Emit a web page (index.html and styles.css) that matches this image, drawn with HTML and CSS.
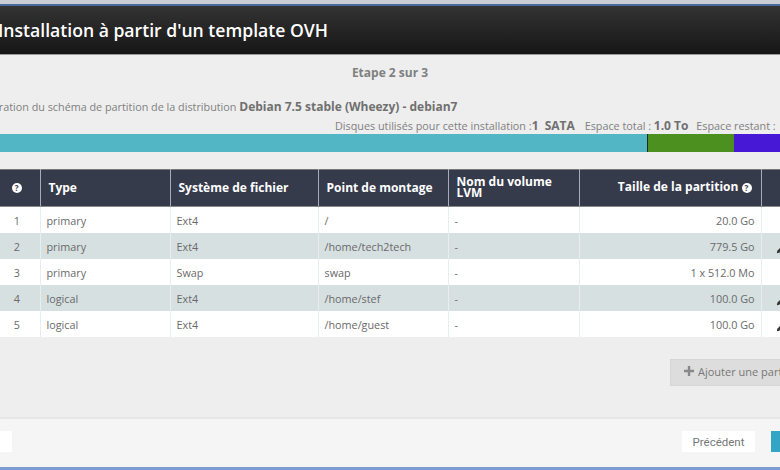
FILE: index.html
```html
<!DOCTYPE html>
<html lang="fr">
<head>
<meta charset="utf-8">
<title>Installation à partir d'un template OVH</title>
<link rel="stylesheet" href="styles.css">
</head>
<body>
<div class="modal">
  <header class="head"><h1>Installation à partir d'un template OVH</h1></header>
  <main class="content">
    <p class="step">Etape 2 sur 3</p>
    <p class="intro">Configuration du schéma de partition de la distribution <b>Debian 7.5 stable (Wheezy) - debian7</b></p>
    <p class="disks">Disques utilisés pour cette installation :<b>1&nbsp; SATA</b> <span class="gap">Espace total : <b>1.0 To</b></span> <span class="gap2">Espace restant : <b class="rest">0 Go</b></span></p>
    <div class="bar"><span class="seg teal"></span><span class="seg green"></span><span class="seg purple"></span></div>
    <table class="parts">
      <thead>
        <tr>
          <th class="c-num"><span class="help">?</span></th>
          <th class="c-type">Type</th>
          <th class="c-fs">Système de fichier</th>
          <th class="c-mount">Point de montage</th>
          <th class="c-lvm">Nom du volume LVM</th>
          <th class="c-size">Taille de la partition <span class="help">?</span></th>
          <th class="c-act"></th>
        </tr>
      </thead>
      <tbody>
        <tr><td class="c-num">1</td><td>primary</td><td>Ext4</td><td>/</td><td>-</td><td class="c-size">20.0 Go</td><td></td></tr>
        <tr><td class="c-num">2</td><td>primary</td><td>Ext4</td><td>/home/tech2tech</td><td>-</td><td class="c-size">779.5 Go</td><td class="c-act"><svg class="pen" viewBox="0 0 12 12"><path d="M1 11l.6-3L8 1.600 10.400 4 4 10.400z"/></svg></td></tr>
        <tr><td class="c-num">3</td><td>primary</td><td>Swap</td><td>swap</td><td>-</td><td class="c-size">1 x 512.0 Mo</td><td></td></tr>
        <tr><td class="c-num">4</td><td>logical</td><td>Ext4</td><td>/home/stef</td><td>-</td><td class="c-size">100.0 Go</td><td class="c-act"><svg class="pen" viewBox="0 0 12 12"><path d="M1 11l.6-3L8 1.600 10.400 4 4 10.400z"/></svg></td></tr>
        <tr><td class="c-num">5</td><td>logical</td><td>Ext4</td><td>/home/guest</td><td>-</td><td class="c-size">100.0 Go</td><td class="c-act"><svg class="pen" viewBox="0 0 12 12"><path d="M1 11l.6-3L8 1.600 10.400 4 4 10.400z"/></svg></td></tr>
      </tbody>
    </table>
    <div class="add-row">
      <button class="add" type="button"><svg class="plus" viewBox="0 0 10 10"><path d="M3.800 0h2.400v3.800H10v2.400H6.200V10H3.800V6.200H0V3.800h3.800z"/></svg>Ajouter une partition</button>
    </div>
  </main>
  <footer class="foot">
    <button class="btn cancel" type="button">Annuler</button>
    <div class="foot-right">
      <button class="btn" type="button">Précédent</button>
      <button class="btn primary" type="button">Suivant</button>
    </div>
  </footer>
</div>
</body>
</html>
```
FILE: styles.css
```css
html, body {
  margin: 0;
  padding: 0;
  width: 780px;
  height: 470px;
  overflow: hidden;
  background: #c9ccd2;
}
body {
  font-family: "Open Sans", "Liberation Sans", sans-serif;
  color: #666;
  padding-top: 4px;
  box-sizing: border-box;
}
.modal {
  width: 860px;
  margin-left: -40px;
  height: 466px;
  display: flex;
  flex-direction: column;
  border-top: 2px solid #4a6a9c;
  border-bottom: 3px solid #7d9ccf;
  box-sizing: border-box;
  background: #eee;
}
.head {
  height: 48px;
  flex: none;
  background: linear-gradient(#333, #161616);
  border-bottom: 1px solid #999;
  display: flex;
  align-items: center;
  padding-left: 38px;
}
.head h1 {
  margin: 0;
  color: #fff;
  font-size: 17.600px;
  font-weight: 600;
  white-space: nowrap;
}
.content {
  flex: 1;
  display: flex;
  flex-direction: column;
}
.step {
  margin: 10px 0 0;
  height: 16px;
  line-height: 16px;
  text-align: center;
  font-size: 12px;
  font-weight: 700;
  color: #808080;
}
.intro {
  margin: 18px 0 0;
  height: 16px;
  line-height: 16px;
  font-size: 10.800px;
  color: #808080;
  white-space: nowrap;
}
.intro b, .disks b {
  color: #707070;
  font-size: 12px;
}
.disks {
  margin: 3px 0 0;
  height: 16px;
  line-height: 16px;
  padding-left: 375px;
  font-size: 10.800px;
  color: #808080;
  white-space: nowrap;
}
.gap { margin-left: 7px; }
.gap2 { margin-left: 5px; }
.disks .rest { margin-left: 6px; }
.bar {
  height: 18px;
  display: flex;
  flex: none;
}
.seg { display: block; height: 100%; }
.teal { width: 687px; background: #53b6c4; border-right: 1px solid #1c2b2e; }
.green { width: 86px; background: #4c9020; }
.purple { flex: 1; background: #4718d6; }
.parts {
  margin-top: 17px;
  width: 860px;
  table-layout: fixed;
  border-collapse: collapse;
  font-size: 10.800px;
}
.parts th {
  height: 37px;
  padding: 0 8px 2px;
  box-sizing: border-box;
  background: #363b4c;
  color: #fff;
  font-size: 12px;
  font-weight: 700;
  line-height: 11px;
  text-align: left;
  border-right: 1px solid #aab;
  border-top: 1px solid #777;
  border-bottom: 1px solid #888;
}
.parts td {
  height: 26px;
  padding: 2px 6px 0;
  box-sizing: border-box;
  border-right: 1px solid #e8eeee;
  color: #6a6a6a;
  background: #fff;
  white-space: nowrap;
  overflow: hidden;
}
.parts tbody tr:nth-child(even) td { background: #d6e0e1; }
.parts th.c-num, .parts td.c-num { width: 80px; text-align: center; padding-left: 34px; padding-right: 0; }
.c-type { width: 130px; }
.c-fs { width: 148px; }
.c-mount { width: 130px; }
.c-lvm { width: 131px; }
.parts th.c-size, .parts td.c-size { width: 182px; text-align: right; }
.parts th.c-size { padding-right: 9px; }
.c-act { width: 59px; }
.parts td.c-act { padding: 6px 0 0 14px; }
.help {
  display: inline-block;
  width: 10px;
  height: 10px;
  border-radius: 50%;
  background: #fff;
  color: #363b4c;
  font-size: 8px;
  line-height: 10px;
  text-align: center;
  font-weight: 700;
}
.pen { width: 10px; height: 10px; fill: #333; display: block; }
.add-row {
  margin-top: 22px;
  padding-left: 710px;
}
.add {
  width: 140px;
  height: 27px;
  padding: 0 0 2px 13px;
  display: flex;
  align-items: center;
  gap: 4px;
  background: #ddd;
  border: 1px solid #d6d6d6;
  color: #777;
  font: 11px "Open Sans", "Liberation Sans", sans-serif;
  white-space: nowrap;
}
.plus { width: 10px; height: 10px; fill: #888; flex: none; }
.foot {
  height: 50px;
  flex: none;
  background: #f5f5f5;
  border-top: 2px solid #e6e6e6;
  box-sizing: border-box;
  display: flex;
  align-items: center;
  justify-content: space-between;
  padding-bottom: 3px;
}
.foot-right {
  display: flex;
  gap: 16px;
  margin-right: -24px;
}
.btn {
  width: 73px;
  height: 21px;
  padding: 0;
  border: 0;
  background: #fff;
  color: #777;
  font: 11.500px "Roboto", "Open Sans", sans-serif;
}
.cancel { width: 52px; padding-right: 12px; }
.primary { background: #34a5c4; color: #fff; }
```
